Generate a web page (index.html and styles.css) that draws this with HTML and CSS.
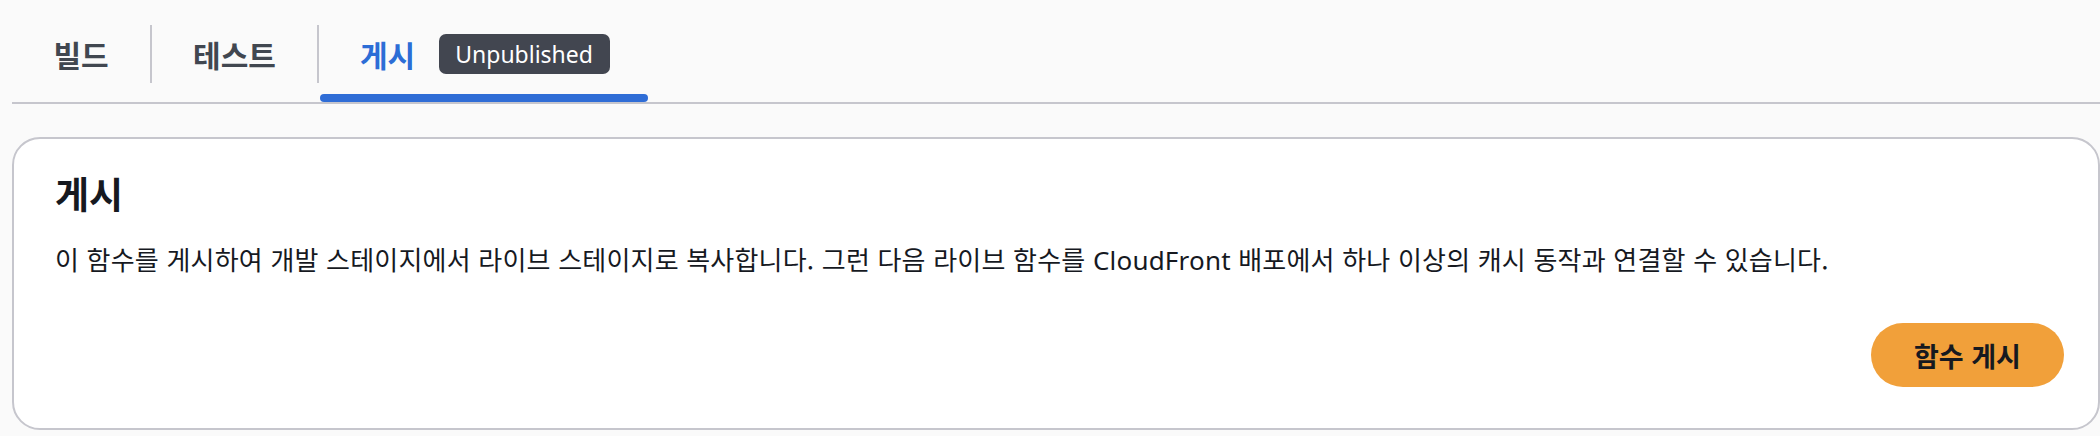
FILE: index.html
```html
<!DOCTYPE html>
<html lang="ko">
<head>
<meta charset="utf-8">
<title>게시</title>
<link rel="stylesheet" href="styles.css">
</head>
<body>
<div class="page">
  <div class="tabs">
    <div class="tab tab-first">
      <div class="tab-body"><span class="tab-label">빌드</span></div>
    </div>
    <div class="tab tab-second">
      <div class="tab-body sep"><span class="tab-label">테스트</span></div>
    </div>
    <div class="tab tab-active">
      <div class="tab-body sep"><span class="tab-label">게시</span><span class="badge">Unpublished</span></div>
      <div class="indicator"></div>
    </div>
  </div>
  <section class="card">
    <h2 class="card-title">게시</h2>
    <p class="card-text">이 함수를 게시하여 개발 스테이지에서 라이브 스테이지로 복사합니다. 그런 다음 라이브 함수를 <span class="latin">CloudFront</span> 배포에서 하나 이상의 캐시 동작과 연결할 수 있습니다.</p>
    <div class="actions"><button class="btn-primary" type="button">함수 게시</button></div>
  </section>
</div>
</body>
</html>
```
FILE: styles.css
```css
html, body {
  margin: 0;
  padding: 0;
}
body {
  background: #fafafa;
  font-family: "Noto Sans", "Noto Sans CJK KR", sans-serif;
  color: #16191f;
  overflow: hidden;
}
.page {
  padding-left: 12px;
}
.tabs {
  display: flex;
  align-items: flex-start;
  height: 102px;
  border-bottom: 2px solid #c6c6cd;
}
.tab {
  display: flex;
  flex-direction: column;
  padding-top: 25px;
}
.tab-body {
  height: 58px;
  display: flex;
  align-items: center;
  justify-content: center;
  box-sizing: border-box;
}
.tab-first .tab-body {
  width: 138px;
}
.tab-second .tab-body {
  width: 167px;
}
.tab-active .tab-body {
  justify-content: flex-start;
  padding: 0 38px 0 41px;
}
.sep {
  border-left: 2px solid #c6c6cd;
}
.tab-label {
  font-family: "Noto Sans CJK KR", sans-serif;
  font-size: 30px;
  font-weight: 700;
  color: #414750;
  line-height: 40px;
  white-space: nowrap;
}
.tab-active .tab-label {
  color: #2c6dd6;
}
.badge {
  margin-left: 24px;
  height: 40px;
  display: inline-flex;
  align-items: center;
  padding: 0 17px 0 16px;
  border-radius: 7px;
  background: #424650;
  color: #ffffff;
  font-family: "Noto Sans", sans-serif;
  font-size: 23px;
  line-height: 1;
}
.indicator {
  margin-top: 11px;
  margin-left: 3px;
  height: 8px;
  border-radius: 4px;
  background: #2f6dd6;
}
.card {
  margin-top: 33px;
  background: #ffffff;
  border: 2px solid #c6c6cd;
  border-radius: 28px;
  padding: 30px 34px 41px 41px;
}
.card-title {
  margin: 0;
  font-family: "Noto Sans CJK KR", sans-serif;
  font-size: 37px;
  font-weight: 700;
  line-height: 48px;
  color: #16191f;
}
.card-text {
  margin: 24px 0 0 0;
  font-family: "Noto Sans CJK KR", sans-serif;
  font-size: 26px;
  letter-spacing: 0.2px;
  line-height: 36px;
  color: #16191f;
}
.latin {
  font-family: "Noto Sans", sans-serif;
  font-size: 26px;
}
.actions {
  display: flex;
  justify-content: flex-end;
  margin-top: 45px;
}
.btn-primary {
  width: 193px;
  height: 64px;
  border: none;
  border-radius: 32px;
  background: #f1a03a;
  color: #16191f;
  font-family: "Noto Sans CJK KR", sans-serif;
  font-size: 27px;
  font-weight: 700;
  padding: 0;
}
```
